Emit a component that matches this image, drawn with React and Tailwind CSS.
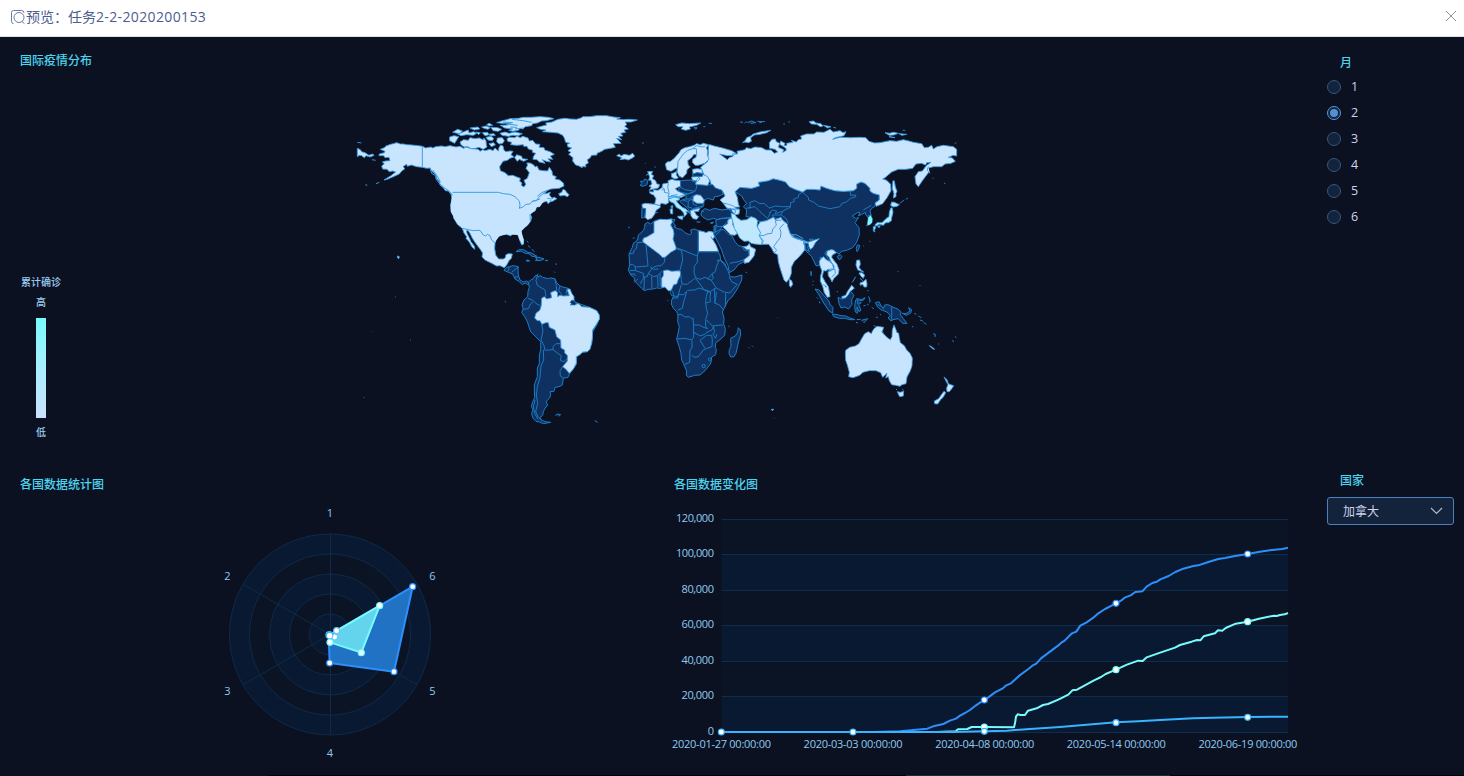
import React from 'react';

const FILL = { light: '#c9e4fd', dark: '#0f3161', iran: '#bfe8fc', japan: '#aeeafd', korea: '#7ff9ff', usa: '#c6e4fd' };

function Land({ d, k = 'light' }) {
  return <path d={d} fill={FILL[k]} stroke={k === 'dark' ? '#1c7dc6' : '#3b9fe6'} strokeWidth={k === 'dark' ? 1 : 0.9} strokeLinejoin="round" vectorEffect="non-scaling-stroke" />;
}

function Border({ d, on }) {
  return <path d={d} fill="none" stroke={on === 'light' ? '#3f9fe2' : '#1b79bf'} strokeWidth="1" strokeLinejoin="round" vectorEffect="non-scaling-stroke" />;
}

function Tile({ x, y, children }) {
  return <g transform={`translate(${x} ${y}) scale(0.33333)`}>{children}</g>;
}

function WorldMap() {
  return (
    <svg className="block h-[340px] w-[620px]" viewBox="350 100 620 340">
      <Tile x={500} y={250}>
        <Land k="dark" d="M12 61 20 52 28 50 40 47 55 50 54 62 55 75 60 90 70 96 80 93 90 100 85 104 75 99 67 104 58 95 45 87 38 72 25 67z" />
        <Border d="M28 51 24 64M35 67 54 52M45 82 55 80" />
        <Land k="dark" d="M85 97 92 90 100 86 105 78 112 75 115 82 120 76 128 82 145 86 150 84 165 86 170 98 180 108 192 112 205 115 220 140 222 155 235 160 268 172 290 182 298 205 290 225 278 245 275 280 262 305 240 308 230 322 228 345 208 372 204 382 190 385 187 405 177 410 165 412 162 424 150 425 152 436 148 445 138 455 143 465 135 475 130 485 128 496 120 503 124 510 135 515 152 517 130 521 118 516 108 514 98 503 95 490 99 478 94 470 98 455 104 443 103 420 103 405 112 380 112 355 118 340 118 315 122 300 122 275 105 258 92 245 82 215 74 200 65 187 70 177 66 165 72 150 83 140 84 125 88 112z" />
        <Land d="M125 145 133 140 140 147 155 143 152 128 165 122 172 126 173 140 180 136 190 138 208 137 201 118 210 117 215 130 222 140 222 155 210 165 218 165 225 160 237 162 245 170 268 172 290 182 298 195 298 208 288 225 278 240 277 265 275 280 270 298 262 305 248 306 240 314 229 320 229 340 220 357 208 370 198 358 188 350 202 333 202 316 194 309 194 300 183 294 182 270 170 260 165 240 148 232 145 218 137 218 126 223 120 212 112 212 104 204 108 190 120 180 124 166z" />
        <Border d="M125 222 129 243 123 270 132 286 135 301 159 299 160 289 168 281 182 281M159 299 172 309 184 317 181 332 192 335 202 325M188 350 180 362 181 378 190 384M130 300 131 330 123 348 120 382 112 410 109 435 113 460 107 485 114 500 126 512M105 450 100 470 104 490 114 508M112 78 108 92 112 106 135 120 138 140M84 145 97 150 107 160 121 167M70 178 85 176 90 165 98 155M165 88 169 107 170 122M180 109 176 121 187 137M201 118 198 130 204 137" />
        <Land k="dark" d="M210 158 216 150 224 154 230 162 222 166M166 496 174 492 182 494 176 499M284 512 288 514 293 517" />
        <Land k="dark" d="M78 31 85 30 88 33 81 34zM135 31h8M162 65l3 3M167 40l2 5M14 154l4 3M112 75l4-4" />
      </Tile>

      <Tile x={350} y={105}>
        <Land d="M91 133 103 128 108 123 122 118 130 116 140 113 151 117 160 117 170 119 185 120 205 122 217 124 227 129 243 126 248 129 257 125 275 123 285 125 300 122 318 126 330 124 341 130 347 126 365 131 385 133 390 139 398 134 405 137 420 133 429 137 435 129 445 138 447 128 452 120 459 123 462 136 468 140 480 138 489 139 483 149 492 156 480 160 472 166 459 169 449 185 451 197 465 203 475 212 489 211 498 215 511 220 509 229 516 234 514 241 522 246 527 238 522 226 532 220 538 203 528 190 533 180 530 174 540 174 550 179 556 186 561 183 567 195 580 197 593 198 598 187 606 199 608 211 619 215 615 222 629 225 640 234 642 243 628 250 603 252 590 257 584 267 601 262 598 270 605 278 620 281 600 291 594 296 590 289 575 293 569 305 560 306 555 318 547 318 541 328 545 337 542 348 533 360 520 370 514 378 515 390 521 405 520 418 515 420 509 405 504 390 495 385 487 387 482 393 470 388 458 389 447 394 438 404 435 416 434 430 437 450 446 462 460 462 466 458 468 449 475 446 487 447 484 460 478 466 470 480 463 488 450 482 440 483 425 475 405 465 396 455 398 444 390 432 377 415 367 400 361 387 355 377 349 377 351 385 358 399 363 410 374 425 374 433 366 426 358 411 348 400 350 395 342 384 337 370 322 358 318 350 311 340 310 332 303 320 302 300 306 280 303 268 295 258 286 257 280 248 270 240 268 230 260 220 258 210 245 198 240 189 230 190 217 187 200 185 184 180 172 184 170 178 160 184 164 192 155 198 148 207 128 216 112 223 102 225 123 212 137 201 128 198 118 200 111 193 98 192 95 183 103 176 97 171 107 168 120 167 117 157 105 158 101 152 87 152 88 147 103 143 105 139z" />
        <path d="M308 262 445 262 460 266 480 268 495 275 508 288 508 310 520 306 540 295 548 288 560 285 568 275 585 285 569 305 560 306 555 318 541 328 542 348 533 360 514 378 521 405 520 418 509 405 504 390 470 388 447 394 435 412 425 405 412 388 400 390 385 376 355 374 337 370 318 350 303 320 302 300z" fill="#c6e4fd" />
        <Border on="light" d="M217 124V188M308 262H445L460 266 480 268 495 275 508 288 510 300 508 310 520 305 528 298 540 297 548 288 560 287 568 275 585 262M545 290 570 282M337 370 355 374 370 377 390 376 400 390 407 393 412 388 420 392 425 405 434 413" />
        <Border on="light" d="M240 188 245 205 257 212 258 222 268 235 285 250 300 260 308 271M248 195 256 205 264 218 272 232M562 274 575 263 590 257M540 328 541 350" />
        <Land d="M22 130 31 134 35 140 45 143 57 151 68 147 72 151 60 156 48 152 43 158 35 152 28 151 22 155zM66 164 77 166M22 112 34 114M46 239 52 241M78 236 88 232" />
        <Land d="M299 96 312 92 326 95 320 105 314 115 299 107zM330 111 341 104 355 106 360 98 375 101 388 99 400 105 401 99 408 107 409 119 411 126 400 133 387 127 377 130 364 131 353 125 342 126 333 119zM308 82 323 73 337 78 328 86zM323 87 342 80 355 75 357 84 371 80 380 85 370 91 350 89 333 92zM360 69 384 66 389 72 373 75zM395 66 408 63 421 68 414 73 402 70zM378 81 391 83 386 89zM397 83 412 82 418 89 405 92zM408 97 423 94 431 100 427 107 414 105zM417 116 431 113 436 120 424 125zM415 88 432 86 436 91 423 93zM423 67 443 68 455 73 445 79 429 77zM410 59 418 55 428 61 417 63z" />
        <Land d="M440 53 455 48 470 44 480 41 506 40 520 37 543 37 570 35 595 37 612 41 588 47 575 48 562 54 548 56 545 62 526 65 518 72 510 70 505 76 488 79 476 76 488 72 464 69 451 61 475 60 475 54 456 55zM450 85 465 81 477 85 495 81 517 86 505 92 488 91 475 94 456 91z" />
        <Border on="light" d="M459 51 488 53 469 57 503 61M480 66 500 67 497 72 521 69M486 43 519 47 545 52" />
        <Land d="M471 101 478 97 495 98 500 93 511 98 518 94 534 99 538 108 548 106 557 117 570 118 567 127 582 128 584 135 600 140 613 148 601 153 608 163 594 161 602 171 589 169 577 164 585 175 568 171 561 164 549 163 550 155 557 145 547 142 548 136 535 132 531 124 521 124 520 119 501 121 482 119 485 112 473 109zM442 99 457 98 463 107 458 115 447 117 440 110zM494 158 500 149 515 154 517 161 533 163 521 169 508 163 502 169z" />
        <Land d="M626 266 635 262 639 253 646 256 649 261 657 269 653 275 642 271 630 273zM592 280 605 282 613 277 620 281 607 289 599 287" />
        <Land k="dark" d="M498 440 507 434 521 434 534 442 545 444 561 454 545 454 540 447 523 444 515 439zM555 457 567 457 582 462 570 467 556 466 562 462zM530 408 535 412M534 422 541 428M545 432 553 440M586 467 593 467M530 467 539 468" />
        <Land d="M142 453 148 455 146 461 143 459z" />
      </Tile>

      <Tile x={500} y={105}>
        <Land d="M110 68 127 63 140 60 137 54 156 51 174 43 195 40 210 42 230 43 245 38 248 35 270 35 290 32 320 32 340 36 361 38 350 42 371 44 385 43 412 45 393 51 376 51 380 59 374 64 385 72 372 75 377 82 362 85 369 93 355 94 365 104 350 100 363 115 340 116 346 127 325 131 314 133 305 139 291 145 291 150 275 151 270 159 262 164 265 174 256 179 258 186 248 184 247 188 235 182 227 180 218 168 219 158 206 148 213 142 204 137 215 129 203 125 202 117 210 115 197 112 193 99 188 91 174 84 152 82 140 81 127 80 138 75 121 73z" />
        <Land d="M350 152 358 147 362 153 373 148 388 151 398 145 404 153 399 158 385 165 375 162 360 164 365 158zM527 59 545 54 568 56 602 54 590 61 568 66 571 72 557 76 544 72 549 65 535 65z" />
        <Land k="dark" d="M582 68 591 68 588 73zM610 65h6M626 55h10M426 114h5M463 186h4M436 175h2M386 366h2M398 400h2" />
      </Tile>

      <Tile x={610} y={210}>
        <Land k="dark" d="M105 42 113 37 122 42 134 33 150 28 170 29 185 27 195 29 190 38 197 48 192 50 203 56 215 58 225 68 238 74 245 70 242 60 254 57 265 62 280 65 288 68 298 64 310 67 314 80 308 87 303 80 318 105 322 122 330 135 332 150 345 160 350 175 355 185 360 200 374 201 396 195 395 210 380 240 365 262 355 270 345 290 337 306 342 324 341 343 346 355 344 376 330 389 317 399 316 412 319 418 317 434 304 442 305 451 300 464 285 482 270 495 254 496 235 502 229 495 230 483 220 460 215 450 213 430 208 412 200 388 205 366 208 350 203 335 204 315 200 305 190 295 184 282 185 270 191 260 188 244 180 241 175 242 165 231 150 235 140 234 130 237 114 238 103 242 95 235 85 225 74 213 72 202 63 196 55 180 59 165 58 147 57 132 67 112 70 100 83 90 85 75 100 62 104 52z" />
        <Land d="M132 35 150 28 170 29 185 27 187 36 182 45 190 60 192 72 189 87 198 112 198 118 182 127 165 142 157 142 150 134 98 95 100 85 112 80 132 68z" />
        <Land d="M265 62 280 65 288 68 298 64 310 67 314 80 308 87 303 80 318 105 324 120 325 125 265 125zM160 182 172 180 185 184 210 182 212 195 205 208 200 222 191 224 184 240 175 242 165 231 155 232 155 205 160 197z" />
        <Border d="M98 92 98 97 82 98 79 116 73 120 70 130 58 131M108 102 114 168 79 171 67 163 60 165M165 142 163 157 153 167 140 168 128 173 115 190 112 200 100 201 100 190 77 182 75 170M198 116 215 122 218 150 210 180 205 184M198 113 210 117 262 138 265 125 265 62M262 138 262 157 253 169 252 187 257 203 250 209 231 223 216 222 214 209 212 192M325 125H265M257 203 270 208 285 202 295 206 306 191 316 185 319 170 328 150M306 191 310 205 304 211 319 234 341 246 359 249 382 223 366 216 357 201M257 206 272 225 283 240 300 245 319 234M319 245 317 266 313 279 327 284 341 300M347 250 346 291M232 242 243 240 255 240 267 234 283 240 294 242 289 260 287 276 289 295 293 310 287 328 287 350 293 356 280 352 268 345 250 345M290 245 302 247 300 262 301 275 288 279M187 264 203 264 205 254 221 254 230 244 225 263 221 275 217 295 204 300M203 315 213 313 225 321 238 320 244 326 249 324 251 345 250 370M200 387 225 385 244 390 250 383 252 367 270 378 284 373 288 368 306 360 310 350 296 337 290 330M246 391 246 415 240 420 239 457 224 463M245 435 252 442 265 440 280 420 294 414 306 410 307 390 305 376 290 376 270 391 285 415M311 347 338 345M310 347 314 365 309 373 317 385 320 372M60 193 73 192 76 198M83 207 73 217M91 222 96 212 103 201M103 201 102 240M125 200 126 234M143 197 144 231M150 192 151 229M115 190 130 200 143 197 155 184M180 244 185 257 203 260 214 224M330 149 353 176M60 182 77 181M320 152 330 150M120 170 130 178 145 177M305 211 290 205M315 279 313 235" />
        <circle cx="281" cy="468" r="5" className="fill-none stroke-[#1b79bf] stroke-[3]" />
        <circle cx="299" cy="448" r="4" className="fill-none stroke-[#1b79bf] stroke-[3]" />
        <Land k="dark" d="M385 353 391 360 392 375 387 390 378 430 372 440 362 441 357 430 358 419 363 409 362 385 376 378 383 367zM416 412l3 3M426 407l3 3M355 348l4 3M407 187h4M55 53h4M70 84h4M80 87h3M172 271h3" />
        <Land k="dark" d="M312 48 322 44 333 60 340 58 355 72 365 76 375 95 385 107 399 110 412 115 415 123 418 135 402 155 385 164 372 180 358 188 354 166 343 145 335 120 320 90 312 74z" />
        <Border d="M317 76 332 62M402 149 385 155 373 157 360 160M397 111 402 120 415 122M314 48 316 70" />
        <Land d="M400 110 412 108 418 100 422 110 437 118 432 138 417 157 403 160 402 149 418 137 418 119 408 118z" />
      </Tile>

      <Tile x={740} y={110}>
        <Land k="dark" d="M-15 245 0 232 35 235 58 228 55 217 85 212 100 206 125 212 137 216 148 230 165 238 188 246 200 238 222 238 240 240 243 228 260 235 285 242 310 244 340 242 350 235 350 222 363 216 375 220 390 235 390 243 400 250 418 255 417 272 408 275 405 289 395 295 390 303 394 319 385 323 378 316 376 307 365 313 355 318 360 308 352 308 337 318 347 325 356 323 345 338 357 353 358 375 350 397 338 413 320 421 305 424 297 432 286 425 279 421 264 421 254 429 265 447 272 455 260 457 252 445 240 442 242 456 236 467 228 467 221 452 215 440 205 430 195 420 190 405 200 395 165 380 150 370 143 350 125 330 100 322 80 332 60 336 35 322 18 320 20 300 10 290 20 280 13 272 5 258z" />
        <Border d="M188 246 205 262 206 270 222 277 235 288 270 296 300 290 306 280 319 276 332 265 348 260 346 255 332 256 330 243M188 246 176 254 175 262 160 268 163 275 152 278 151 292 130 302 122 314 137 324 145 340M30 297 30 277 45 272 57 280 73 281 88 294 106 288 125 290 150 290M18 295 45 290 60 305 85 327M88 308 97 300 110 303 105 311 125 305 130 303M85 322 92 305M100 321 97 315 122 315M370 300 394 286M383 318 394 315" />
        <Land d="M-95 106 -90 104 -78 108 -53 114 -25 122 -12 130 -18 136 -38 137 -61 132 -46 143 -38 149 -31 142 -22 140 -22 131 -7 132 -9 124 15 119 19 113 32 116 45 111 65 113 78 120 93 120 103 130 113 126 105 118 89 115 88 98 96 88 106 87 109 95 119 100 115 112 131 119 128 127 139 121 137 114 119 103 122 93 135 100 132 107 141 106 140 100 159 97 154 91 169 96 175 89 185 87 182 78 200 72 222 72 230 66 252 67 270 58 280 66 300 62 309 68 318 65 312 77 286 83 278 88 300 82 332 83 360 82 377 83 387 94 404 99 420 98 450 92 470 94 490 89 510 94 520 97 545 101 553 113 565 112 575 106 580 117 591 110 610 106 640 110 650 118 650 138 640 136 625 142 637 144 646 154 633 160 615 162 605 170 580 170 563 175 567 186 557 199 548 211 535 230 528 222 525 200 535 185 547 183 559 167 573 157 560 158 557 165 544 160 528 162 518 175 497 178 475 178 455 186 435 203 428 207 440 211 452 223 453 242 441 263 428 281 409 289 405 280 418 270 418 255 400 250 390 243 390 235 375 220 363 216 350 222 350 235 340 242 310 244 285 242 260 235 243 228 240 240 222 238 200 238 188 246 165 238 148 230 137 216 125 212 100 206 85 212 55 217 58 228 35 235 0 232 -15 245 -8 262 -5 282 -1 291 -20 292 -35 285 -50 280 -60 270 -45 258 -51 245 -70 238 -85 230 -90 210 -105 200 -112 185 -118 172 -110 165 -98 155 -95 130z" />
        <Land d="M8 98 17 90 20 83 33 78 40 72 60 66 92 61 80 68 60 73 43 75 32 83 34 94 25 98 15 96zM207 35 220 33 228 39 243 41 249 48 241 50 230 43 215 42zM250 46 273 50 263 54zM435 68 449 70 460 67 475 70 461 75 448 76zM477 71 500 73 486 76zM447 80 465 83zM280 52 288 54M565 170 562 181 570 190" />
        <Land k="dark" d="M0 36 9 37M14 39 20 35M22 38 34 33 48 38 32 40M52 34 75 35M58 38 66 37M130 42h5M145 36h5M488 61h8M644 101l5-3M578 205h3M612 220h4M504 264 498 268M493 270 479 280" />
        <Land d="M459 212 463 213 466 231 471 244 468 250 468 260 460 264 462 251 457 235z" />
        <Land k="japan" d="M455 276 463 277 478 284 471 289 459 291 452 286zM453 293 457 295 459 307 455 323 454 332 445 338 437 338 430 346 419 343 410 347 404 346 411 338 426 338 438 326 447 320 448 306zM400 350 408 350 403 361 405 366 400 363zM413 349 421 347 417 353z" />
        <path d="M385 322 392 317 397 326 396 338 388 345 382 345z" fill="#7ff9ff" stroke="#5cdcf6" strokeWidth="1.500" />
        <Land d="M60 336 80 332 100 322 106 329 123 322 128 331 142 342 143 350 150 370 165 385 190 392 203 397 224 390 238 386 226 398 218 413 211 418 205 406 195 402 194 420 185 432 173 445 163 454 154 472 154 490 148 506 139 517 132 510 121 477 115 455 113 434 102 429 95 415 86 403 65 403 60 391 54 375 58 364 52 350z" />
        <Border on="light" d="M54 375 70 377 81 372 95 370 99 356 109 346 106 332 125 330M102 429 110 421 101 410 112 394 121 383 123 367 119 355 132 341M65 403 70 393 56 375M150 370 157 381 182 390 206 397 M190 392 192 405M153 374 168 374 190 386" />
        <Land k="dark" d="M194 398 206 402 203 412 208 425 197 418zM207 388 220 387 214 393z" />
        <Land d="M148 508 155 512 158 523 152 532 148 526z" />
        <Land d="M242 447 251 440 257 448 270 455 278 463 281 477 271 482 263 478 258 483 251 482 249 490 247 500 255 515 265 530 268 545 270 560 262 562 253 548 248 529 241 513 242 497 246 483 240 468 238 455zM261 424 273 419 280 420 289 428 277 435 275 442 283 453 291 463 297 479 295 492 281 506 276 516 272 507 265 497 264 485 273 482 282 477 282 468 272 454 268 443 260 434z" />
        <Border on="light" d="M257 483 271 477 285 478 286 490 275 502M250 523 261 532" />
        <Land k="dark" d="M352 405 359 406 356 418 351 425 349 415zM293 438 301 434 306 440 300 449 294 446zM213 485 214 496M218 514h3M255 530h3M370 408h2M388 394h3M378 347h5" />
        <Land d="M350 451 359 450 361 463 357 472 363 480 371 486 359 482 353 479 348 465zM357 489 366 488 374 495 370 505 363 499zM360 519 370 515 378 508 381 521 380 531 372 531 368 523 361 526zM347 500 337 517M360 505 368 512" />
      </Tile>

      <Tile x={620} y={140}>
        <Land d="M136 72 143 65 150 65 163 55 168 49 177 39 183 29 195 23 209 20 222 16 230 11 241 14 250 10 266 14 259 23 263 33 262 45 267 58 254 70 235 76 226 76 217 67 219 57 228 52 229 44 222 43 215 53 203 62 205 75 211 81 201 89 200 100 188 113 178 109 171 95 173 83 166 86 153 94 140 89zM154 101 163 98 170 94 169 105 175 114 165 117 155 112z" />
        <Border on="light" d="M171 95 173 80 174 65 182 53 190 42 203 31 218 26 229 26 230 44M218 26 229 17 247 21 255 19" />
        <Land d="M83 95 98 94 94 103 101 107 97 116 107 122 110 131 119 134 115 144 96 148 88 151 94 141 87 139 96 132 92 120 86 121 89 111zM78 106 86 102" />
        <Land k="dark" d="M61 124 70 124 74 117 83 121 81 134 69 139 60 136 66 131z" />
        <Land d="M88 155 101 156 100 149 114 151 126 143 128 132 138 130 145 129 144 122 156 118 165 121 181 122 183 139 174 142 166 146 175 155 195 157 197 165 185 172 161 174 145 175 147 187 138 193 123 190 119 197 104 192 108 176 101 165 91 161z" />
        <Border on="light" d="M126 141 134 148 133 157 148 160 144 170 158 169 175 170 197 163M145 131 143 142 147 157M148 170 145 185M153 167 173 164M133 149 125 150" />
        <Land d="M66 193 77 190 104 193 122 198 119 204 109 210 104 223 95 235 83 239 75 232 77 207 67 204z" />
        <Land k="dark" d="M66 204 77 206 74 232 65 234zM107 219 114 217M152 198 155 207" />
        <Land k="japan" d="M145 178 155 174 162 171 178 174 178 180 169 182 176 192 187 202 198 207 207 217 198 214 201 221 193 230 191 219 182 209 169 202 162 190 151 185zM173 229 190 228 187 239 175 234zM150 208 158 206 158 222 152 221zM155 197h3v6h-3z" />
        <Land k="dark" d="M181 123 194 121 211 120 227 127 233 131 257 135 278 134 286 144 306 151 309 163 294 169 284 170 280 180 263 175 255 180 247 175 252 183 251 198 241 205 232 203 219 211 210 221 205 207 189 193 179 184 188 179 198 177 198 164 181 156 174 149 182 142z" />
        <Border d="M229 128 230 143 225 154 194 149 182 142M198 164 219 156 225 154M184 157 205 162 220 157M198 177 210 177 222 164M188 181 203 184 217 177 220 193 231 197M205 184 204 201 214 203 218 212M219 206 250 198" />
        <Land d="M220 170 228 164 242 166 248 174 253 182 249 190 231 190 219 182zM211 212 225 208 239 205 236 214 223 214 229 225 236 230 230 238 219 236 213 227zM230 246 241 246M227 133 230 119 238 110 251 104 263 110 269 123 263 136zM218 88 232 86 245 88 248 100 232 98 219 102zM215 111 235 109 240 117 232 124 217 120z" />
        <Land k="dark" d="M217 103 231 98 248 101 247 109 220 109z" />
        <Land k="dark" d="M245 213 255 206 269 211 283 205 306 210 327 207 335 218 338 230 323 234 304 235 292 239 281 235 264 240 249 232 243 225zM287 241 296 237 329 233 322 246 307 260 300 269 286 277 289 255zM271 249 281 246 277 251z" />
        <Border d="M289 258 298 260 307 259M245 213 252 215" />
        <Land d="M309 189 326 193 340 198 350 207 359 208 357 222 347 224 337 216 334 207 321 205z" />
        <Land d="M308 260 323 251 324 240 334 234 340 241 338 254 347 267 353 280 344 286 332 284z" />
        <Border on="light" d="M331 206 346 210 345 220M321 204 333 207 357 207" />
        <Land k="iran" d="M333 220 345 223 350 232 363 241 380 239 394 230 407 235 413 242 411 259 422 279 417 286 427 303 424 314 404 312 394 310 385 303 372 304 359 294 353 282 343 265 339 248 335 233z" />
      </Tile>

      <Tile x={760} y={230}>
        <Land k="dark" d="M165 177 177 180 190 195 206 212 211 225 219 232 218 249 207 243 193 222 184 207 174 190zM217 252 232 254 243 257 257 258 270 264 285 269 270 269 254 265 238 265 221 260zM170 202 174 206M178 214 180 220M290 269 302 268M304 271 323 266 311 279M288 277 294 279" />
        <Land k="dark" d="M234 202 245 207 257 203 264 194 271 183 282 196 275 209 276 223 266 237 254 231 243 234 237 221zM287 210 292 206 304 209 315 203 310 211 294 213 292 220 304 218 296 224 303 241 297 245 291 231 292 250 286 246 284 229z" />
        <Land d="M245 200 257 196 262 185 269 175 275 166 283 174 277 180 271 183 265 194 257 203 247 205z" />
        <Land k="dark" d="M346 218 357 215 362 225 370 236 374 225 384 224 396 230 413 237 424 246 420 252 430 266 441 280 428 280 415 266 399 269 393 273 384 264 391 257 381 246 362 239 353 231zM427 250 438 251 450 243 446 233 455 239 452 249 439 256zM326 199 331 214 327 218M335 232 341 236M310 228 317 226M321 222 326 225M463 250 469 253M475 258 484 263M480 270 490 274M491 278 499 283M520 311 526 313 525 321M576 331l6 5M585 320l4 2M456 290h4M348 262h5M360 254h3M230 185h4M322 182h4M153 123v15M157 165h3M534 342h3" />
        <Border d="M395 230V271M353 222 361 230M290 205 293 214" />
        <Land d="M508 347 515 350 524 358 519 357 511 350z" />
        <path d="M256 372 257 361 269 352 286 348 297 341 305 326 314 311 325 305 334 311 337 304 343 295 352 289 371 292 367 304 371 312 382 323 391 329 396 320 397 300 402 285 408 299 410 307 416 310 418 324 421 338 433 347 440 360 450 370 457 384 456 408 451 422 441 441 438 461 426 464 420 469 407 466 395 464 388 452 385 440 377 444 381 430 368 442 362 428 348 422 328 422 309 427 299 436 279 443 266 440 268 427 262 405 257 391z" fill="#c6e4fd" stroke="#3b9fe6" strokeWidth="0.8" vectorEffect="non-scaling-stroke" />
        <Land d="M412 485 421 487 431 484 430 498 419 500zM408 477 411 480M427 478 431 481M552 441 561 449 565 461 572 464 581 467 576 475 568 485 561 485 560 474 564 464zM552 484 557 488 550 501 541 510 533 522 524 521 523 513 536 506 544 494zM34 538 41 538 37 542z" />
        <Land k="dark" d="M341 287 350 290M365 303 371 312" />
      </Tile>
      <g className="fill-[#173b59]">
        <rect x="371" y="331" width="1" height="1" /><rect x="363" y="397" width="2" height="1" /><rect x="395" y="296" width="1" height="2" />
        <rect x="410" y="339" width="1" height="2" /><rect x="774" y="418" width="1" height="1" />
        <rect x="897" y="271" width="2" height="1" /><rect x="919" y="285" width="2" height="1" /><rect x="777" y="317" width="1" height="1" />
      </g>
    </svg>
  );
}

const label = "font-['Open_Sans','Noto_Sans',sans-serif]";

function Dots({ pts, color, r = 9 }) {
  return pts.map(([x, y], i) => <circle key={i} cx={x} cy={y} r={r} fill="#fff" stroke={color} strokeWidth="3.5" />);
}

function Radar() {
  const cx = 330, cy = 634.5;
  const labels = [['1', 330, 517], ['2', 227.5, 580], ['3', 227.5, 695], ['4', 330, 757], ['5', 432.5, 695], ['6', 432.5, 580]];
  return (
    <svg className="block h-[270px] w-[260px]" viewBox="200 500 260 270">
      {[100.5, 80.5, 60.5, 40.5, 20.5].map((r, i) => (
        <circle key={r} cx={cx} cy={cy} r={r} fill={i % 2 ? '#0a1424' : '#0a1932'} stroke="#0e2a48" strokeWidth="1" />
      ))}
      <path d="M330.5 534V735M243.5 584.5 416.5 684.5M243.5 684.5 416.5 584.5" stroke="#0e2a48" fill="none" />
      <g transform="translate(200 490) scale(0.33333)">
        <path d="M386 437 410 422 638 290 582 545 389 519z" fill="#247ad0" fillOpacity="0.93" stroke="#2d8ffb" strokeWidth="6" strokeLinejoin="round" />
        <path d="M388 436 410 422 539 347 484 488 390 457z" fill="#6adcf1" fillOpacity="0.92" stroke="#77fbfd" strokeWidth="6" strokeLinejoin="round" />
        <path d="M386 437 410 422 404 441z" fill="#54b4ee" stroke="#4bb1ff" strokeWidth="4" />
        <Dots color="#2d8ffb" pts={[[638, 290], [582, 545], [389, 519]]} />
        <Dots color="#77fbfd" pts={[[539, 347], [484, 488], [390, 457]]} />
        <Dots color="#6cc4fb" pts={[[410, 422], [404, 441]]} />
        <circle cx="388" cy="435" r="10" fill="#41b2ff" stroke="#41b2ff" strokeWidth="4" />
        <circle cx="389" cy="437" r="8" fill="#fff" />
      </g>
      {labels.map(([t, x, y]) => <text key={t} x={x} y={y} textAnchor="middle" className={`${label} fill-[#8ecbf0] text-[11px] font-medium`}>{t}</text>)}
    </svg>
  );
}

function Trend() {
  const ys = [519.5, 554.5, 590.5, 625.5, 661.5, 696.5, 732.5];
  const ticks = ['120,000', '100,000', '80,000', '60,000', '40,000', '20,000', '0'];
  const dates = ['2020-01-27 00:00:00', '2020-03-03 00:00:00', '2020-04-08 00:00:00', '2020-05-14 00:00:00', '2020-06-19 00:00:00'];
  return (
    <svg className="block h-[250px] w-[640px]" viewBox="664 506 640 250">
      {ys.slice(0, 6).map((y, i) => <rect key={y} x="721.5" y={y} width="566.5" height={ys[i + 1] - y} fill={i % 2 ? '#0a1932' : '#0a1424'} />)}
      {ys.map((y) => <path key={y} d={`M721.5 ${y}H1288`} stroke="#0e2c4c" />)}
      <g transform="translate(980 470) scale(0.33333)" fill="none" strokeWidth="6" strokeLinejoin="round">
        <path stroke="#2d8ffb" d="M-776 786H-320L-240 784-200 780-158 776-140 769-110 762-90 752-72 746-60 737-45 729-30 720-12 706 0 698 13 690 25 682 45 667 67 656 79 646 93 640 118 617 145 597 157 587 169 581 183 565 207 547 234 527 244 518 254 512 276 490 289 485 301 467 320 457 340 443 355 430 375 417 408 400 423 392 436 382 452 376 466 366 475 365 487 364 500 350 517 339 531 335 541 328 566 318 586 306 610 296 640 288 655 286 685 276 715 267 735 264 765 258 803 252 835 246 875 240 907 237 924 233" />
        <path stroke="#77fbfd" d="M-776 786H-130L-73 784-66 778-38 777-25 771 13 771 102 772 105 760 108 740 113 733 122 735 135 735 144 722 170 715 189 705 204 702 235 689 265 674 277 661 291 659 342 631 363 621 377 612 408 599 441 584 475 572 488 573 500 562 534 550 585 533 600 525 635 515 651 510 661 511 671 499 705 490 714 481 727 482 737 474 767 461 803 455 837 446 882 437 890 438 900 435 914 433 924 429" />
        <path stroke="#38b3ff" d="M-776 786H-80L13 784 80 782 150 777 240 771 320 764 408 757 475 754 540 750 640 745 700 743 803 741 924 740" />
        <Dots color="#2d8ffb" pts={[[13, 690], [408, 400], [803, 252]]} />
        <Dots color="#77fbfd" pts={[[13, 771], [408, 599], [803, 455]]} />
        <Dots color="#38b3ff" pts={[[-776, 786], [-381, 786], [13, 784], [408, 758], [803, 742]]} />
      </g>
      {ticks.map((t, i) => <text key={t} x="714" y={ys[i] + 2.5} textAnchor="end" textLength={[38, 38, 32.5, 32.5, 32.5, 32.5, 6][i]} className={`${label} fill-[#8ecbf0] text-[11px] font-medium`}>{t}</text>)}
      {dates.map((t, i) => <text key={t} x={721.5 + i * 131.6} y="748" textAnchor="middle" textLength="99" className={`${label} fill-[#8ecbf0] text-[11px] font-medium`}>{t}</text>)}
    </svg>
  );
}

function Title({ children }) {
  return <h2 className="h-4 text-[12px] leading-4 font-medium whitespace-nowrap text-[#4bd5ee]">{children}</h2>;
}

export default function App() {
  return (
    <div className="flex h-[776px] w-[1464px] flex-col overflow-hidden bg-[#0b1121] font-['Open_Sans','Noto_Sans_CJK_SC',sans-serif]">
      <header className="flex h-[37px] shrink-0 items-center justify-between border-b border-[#dfe0e3] bg-white pb-[3px] pl-[10px] pr-[7px]">
        <div className="flex items-center pt-px">
          <svg viewBox="0 0 16 16" className="h-4 w-4 fill-none stroke-[#6a7aa8]">
            <path d="M11.5 1.5h-8q-2 0-2 2v9q0 2 2 2M11.5 1.5q2.500 0 2.500 2.500M12 12.500l2.500 2.200" />
            <circle cx="9" cy="8.500" r="5" />
          </svg>
          <span className="text-[14px] leading-5 whitespace-nowrap text-[#4b5d91]">预览：任务<span className="tracking-[0.36px]">2-2-2020200153</span></span>
        </div>
        <svg viewBox="0 0 12 12" className="-mt-0.5 h-3 w-3 fill-none stroke-[#909399]"><path d="M1 1l10 10M11 1L1 11" /></svg>
      </header>

      <main className="flex min-h-0 flex-1">
        <div className="flex w-[1307px] flex-col">
          <section className="flex h-[424px] shrink-0">
            <div className="flex w-[350px] flex-col pt-4 pl-5">
              <Title>国际疫情分布</Title>
              <div className="mt-[205px] flex w-[42px] flex-col items-center text-[10px] leading-4 font-medium text-[#9ccdf0]">
                <span className="whitespace-nowrap">累计确诊</span>
                <span className="mt-1">高</span>
                <div className="mt-2 h-[100px] w-[10px] bg-gradient-to-b from-[#77fbfd] to-[#c9e2ff]" />
                <span className="mt-[6px]">低</span>
              </div>
            </div>
            <div className="pt-[63px]"><WorldMap /></div>
          </section>
          <section className="flex flex-1">
            <div className="flex w-[654px] flex-col pt-4">
              <div className="pl-5"><Title>各国数据统计图</Title></div>
              <div className="mt-[7px] pl-[200px]"><Radar /></div>
            </div>
            <div className="flex flex-col pt-4 pl-[10px]">
              <div className="pl-[10px]"><Title>各国数据变化图</Title></div>
              <div className="mt-[13px]"><Trend /></div>
            </div>
          </section>
        </div>

        <aside className="flex w-[157px] flex-col pt-[18px] pl-5">
          <div className="pl-[13px]"><Title>月</Title></div>
          <div className="mt-[3px] flex flex-col text-[#d0d4ec]">
            {[1, 2, 3, 4, 5, 6].map((m) => (
              <label key={m} className="flex h-[26px] items-center gap-[10px]">
                <span className={`flex h-[14px] w-[14px] items-center justify-center rounded-full border bg-[#13233b] ${m === 2 ? 'border-[#5b9ae0]' : 'border-[#345782]'}`}>
                  {m === 2 && <span className="h-2 w-2 rounded-full bg-[#5290d4]" />}
                </span>
                <span className="text-[12.5px] leading-4 font-medium">{m}</span>
              </label>
            ))}
          </div>
          <div className="mt-[243px] pl-[13px]"><Title>国家</Title></div>
          <div className="mt-2 flex h-[28px] w-[127px] items-center justify-between rounded-[3px] border border-[#4a82c0] bg-[#13233b] pr-[10px] pl-[15px] text-[12px] text-[#d0d3ec]">
            <span className="pt-0.5 leading-4">加拿大</span>
            <svg viewBox="0 0 13 8" className="h-2 w-[13px] fill-none stroke-[#b4bac8]"><path d="M1 1l5.500 5.500L12 1" strokeWidth="1.200" /></svg>
          </div>
        </aside>
      </main>
      <footer className="flex h-px shrink-0">
        <div className="w-[268px] bg-[#0b1121]" />
        <div className="w-[638px] bg-[#030509]" />
        <div className="w-[264px] bg-[#12303a]" />
        <div className="flex-1 bg-[#030509]" />
      </footer>
    </div>
  );
}
